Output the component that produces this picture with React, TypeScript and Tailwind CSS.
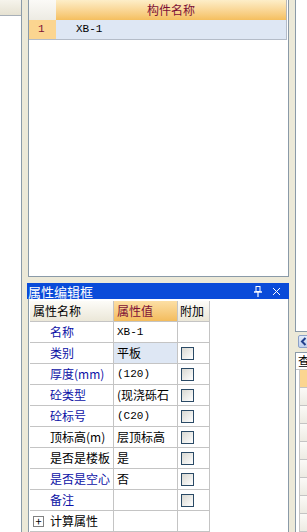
import React from "react";

const cjk = { fontFamily: '"Noto Sans CJK SC", "Noto Sans", sans-serif' };

interface PropRow {
  name: string;
  value: string;
  blue: boolean;
  check: boolean;
  mono?: boolean;
  selected?: boolean;
}

const rows: PropRow[] = [
  { name: "名称", value: "XB-1", blue: true, check: false, mono: true },
  { name: "类别", value: "平板", blue: true, check: true, selected: true },
  { name: "厚度(mm)", value: "(120)", blue: true, check: true, mono: true },
  { name: "砼类型", value: "(现浇砾石", blue: true, check: true },
  { name: "砼标号", value: "(C20)", blue: true, check: true, mono: true },
  { name: "顶标高(m)", value: "层顶标高", blue: false, check: true },
  { name: "是否是楼板", value: "是", blue: false, check: true },
  { name: "是否是空心", value: "否", blue: true, check: true },
  { name: "备注", value: "", blue: true, check: true },
];

function Checkbox() {
  return <div className="w-[13px] h-[13px] border border-[#2a4a66] bg-linear-to-br from-[#d8d8d2] to-white" />;
}

function PinIcon() {
  return (
    <svg width="10" height="11" viewBox="0 0 10 11" className="block">
      <rect x="3" y="0.5" width="4" height="5" fill="none" stroke="white" strokeWidth="1" />
      <line x1="1" y1="6" x2="9" y2="6" stroke="white" strokeWidth="1.4" />
      <line x1="5" y1="6" x2="5" y2="11" stroke="white" strokeWidth="1.2" />
    </svg>
  );
}

function CloseIcon() {
  return (
    <svg width="9" height="9" viewBox="0 0 9 9" className="block">
      <path d="M1 1 L8 8 M8 1 L1 8" stroke="white" strokeWidth="1" />
    </svg>
  );
}

export default function App() {
  return (
    <div className="w-[307px] h-[532px] overflow-hidden flex bg-[#ece9d8] text-[12px] text-black" style={cjk}>
      {/* left docked panel */}
      <div className="w-[22px] shrink-0 bg-white border-r border-[#8a9aa8] flex flex-col">
        <div className="h-[16px] border-b border-[#a8b0b8] bg-linear-to-b from-[#f6f4ec] to-[#e6e2d2]" />
      </div>

      <div className="w-[6px] shrink-0" />

      {/* middle column */}
      <div className="w-[261px] shrink-0 flex flex-col">
        {/* component list panel */}
        <div className="h-[277px] shrink-0 bg-white border border-t-0 border-[#8a9aa8] pr-px">
          <div className="flex h-[20px]">
            <div className="w-[27px] shrink-0 bg-linear-to-b from-[#fbfaf7] to-[#edebe3]" />
            <div className="flex-1 flex items-center justify-center bg-linear-to-b from-[#fdeec8] to-[#f5bf5e] text-[#7d1036] border-r border-[#b8b8b8]">
              构件名称
            </div>
          </div>
          <div className="flex h-[20px] border-b border-[#b4bcc8]">
            <div className="w-[27px] shrink-0 bg-[#fbd590] text-[#7d1036] flex items-center pl-[9px] font-['Liberation_Mono'] text-[11px]">
              1
            </div>
            <div className="flex-1 bg-[#dee7f4] flex items-center pl-[20px] font-['Liberation_Mono'] text-[11px] border-r border-[#b4bcc8]">
              XB-1
            </div>
          </div>
        </div>

        <div className="h-[6px] shrink-0" />

        {/* property editor panel */}
        <div className="flex-1 flex flex-col -ml-px">
          <div className="h-[16px] shrink-0 bg-[#0a4bd9] flex items-center pl-[1px] pr-[8px] text-white text-[13px] leading-none">
            <span>属性编辑框</span>
            <div className="flex-1" />
            <PinIcon />
            <div className="w-[9px]" />
            <CloseIcon />
          </div>
          <div className="flex-1 bg-white border-l border-r border-[#8a9aa8] ml-px pt-[2px] pl-px">
            <div className="w-[180px] border-r border-[#c4c4c4]">
              <div className="flex h-[21px]">
                <div className="w-[84px] shrink-0 flex items-center pl-[3px] bg-linear-to-b from-[#fdfcf8] to-[#ebe7d8] border-r border-b border-[#c4c4c4]">
                  属性名称
                </div>
                <div className="w-[64px] shrink-0 flex items-center pl-[3px] bg-linear-to-b from-[#fcdfa4] to-[#f3bc5c] text-[#7d1036] border-r border-b border-[#c4c4c4]">
                  属性值
                </div>
                <div className="flex-1 flex items-center pl-[2px] bg-linear-to-b from-[#fdfcf8] to-[#ebe7d8] border-b border-[#c4c4c4]">
                  附加
                </div>
              </div>
              {rows.map((r) => (
                <div key={r.name} className="flex h-[21px]">
                  <div
                    className={`w-[84px] shrink-0 flex items-center pl-[20px] border-r border-b border-[#c4c4c4] whitespace-nowrap ${
                      r.blue ? "text-[#0c12a6]" : "text-black"
                    }`}
                  >
                    {r.name}
                  </div>
                  <div
                    className={`w-[64px] shrink-0 flex items-center pl-[3px] border-r border-b border-[#c4c4c4] whitespace-nowrap overflow-hidden ${
                      r.selected ? "bg-[#dee7f4]" : "bg-white"
                    } ${r.mono ? "font-['Liberation_Mono'] text-[11px]" : ""}`}
                  >
                    {r.value}
                  </div>
                  <div className="flex-1 flex items-center pl-[3px] border-b border-[#c4c4c4]">
                    {r.check && <Checkbox />}
                  </div>
                </div>
              ))}
              <div className="flex h-[21px]">
                <div className="w-[84px] shrink-0 flex items-center pl-[3px] border-r border-b border-[#c4c4c4]">
                  <div className="w-[11px] h-[11px] border border-[#808080] flex items-center justify-center text-[11px] leading-none mr-[6px]">
                    +
                  </div>
                  计算属性
                </div>
                <div className="w-[64px] shrink-0 border-r border-b border-[#c4c4c4]" />
                <div className="flex-1 border-b border-[#c4c4c4]" />
              </div>
            </div>
          </div>
        </div>
      </div>

      <div className="w-[6px] shrink-0" />

      {/* right docked panel (cut off) */}
      <div className="flex-1 flex flex-col">
        <div className="h-[332px] shrink-0 bg-white border-l border-b border-[#8a9aa8]" />
        <div className="h-[3px]" />
        <div className="h-[14px] ml-[3px] bg-linear-to-b from-[#e4ecfa] to-[#bfd0ee] border border-[#8aa0c8] rounded-l-[2px] flex items-center pl-[1px]">
          <svg width="7" height="9" viewBox="0 0 7 9" className="block">
            <path d="M5.5 1 L2 4.5 L5.5 8" stroke="#23408c" strokeWidth="2" fill="none" />
          </svg>
        </div>
        <div className="h-[5px]" />
        <div className="flex-1 bg-white border-l border-t border-[#8a9aa8] flex flex-col">
          <div className="h-[17px] pl-[2px] flex items-center bg-white border-b border-[#c4c4c4] whitespace-nowrap">查</div>
          <div className="flex-1 ml-[3px] border-l border-[#c4c4c4] flex flex-col">
            <div className="h-[18px] bg-[#fbd590] border-b border-[#c4c4c4]" />
            {Array.from({ length: 8 }).map((_, i) => (
              <div key={i} className="h-[18px] bg-linear-to-b from-[#fbfaf7] to-[#edebe3] border-b border-[#c4c4c4]" />
            ))}
          </div>
        </div>
      </div>
    </div>
  );
}
